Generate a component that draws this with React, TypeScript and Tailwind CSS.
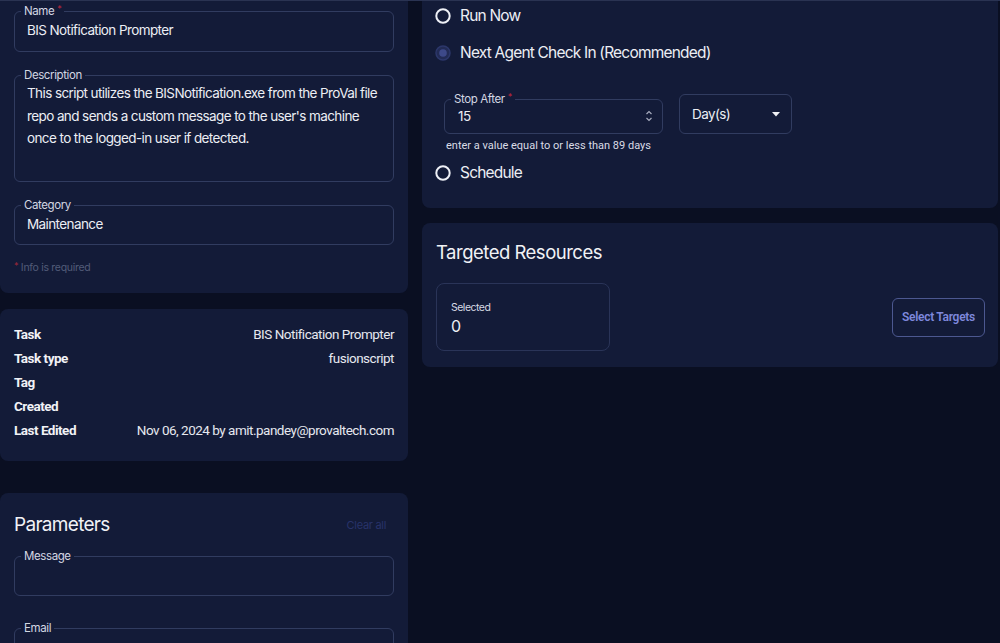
import React from "react";

const BORDER = "border-[#313c60]";

function Field({
  label,
  required,
  children,
  contentClass,
}: {
  label: string;
  required?: boolean;
  children?: React.ReactNode;
  contentClass: string;
}) {
  return (
    <fieldset className={`border ${BORDER} rounded-md px-[6px]`}>
      <legend className="px-[3px] text-[11.5px] tracking-[-0.4px] leading-[16px] text-[#d3d7e3]">
        {label}
        {required && <span className="text-[#c0263b] ml-[3px] relative top-[-3px] text-[9px]">*</span>}
      </legend>
      <div className={`pl-[6px] text-[13.5px] tracking-[-0.6px] text-[#eceef4] ${contentClass}`}>{children}</div>
    </fieldset>
  );
}

function RadioEmpty() {
  return (
    <svg width="16" height="16" viewBox="0 0 16 16" className="shrink-0">
      <circle cx="8" cy="8" r="6.7" fill="none" stroke="#eef0f6" strokeWidth="2" />
    </svg>
  );
}

function RadioChecked() {
  return (
    <svg width="16" height="16" viewBox="0 0 16 16" className="shrink-0">
      <circle cx="8" cy="8" r="7" fill="#222b55" stroke="#2c376a" strokeWidth="1.5" />
      <circle cx="8" cy="8" r="3.8" fill="#3d4989" />
    </svg>
  );
}

function InfoRow({ label, value }: { label: string; value?: string }) {
  return (
    <div className="flex items-center justify-between h-6 tracking-[-0.5px]">
      <span className="font-bold text-[13.5px] text-[#f1f2f6]">{label}</span>
      <span className="text-[13.5px] text-[#e6e8ef]">{value}</span>
    </div>
  );
}

export default function App() {
  return (
    <div
      className="w-[1000px] h-[643px] overflow-hidden bg-[#0a0f22] flex flex-col"
      style={{ fontFamily: "Inter, 'Noto Sans', sans-serif" }}
    >
      <div className="h-px bg-[#2a3352] shrink-0" />
      <div className="flex flex-1 min-h-0">
        {/* Left column */}
        <div className="w-[408px] shrink-0 flex flex-col">
          <div className="bg-[#131b38] rounded-b-lg px-[14px] pt-[2px] pb-[17px]">
            <Field label="Name" required contentClass="leading-[20px] h-[31px]">
              BIS Notification Prompter
            </Field>
            <div className="mt-[15px]">
              <Field label="Description" contentClass="leading-[22.5px] h-[99px] mt-[-1px]">
                This script utilizes the BISNotification.exe from the ProVal file repo and sends a custom message to
                the user's machine once to the logged-in user if detected.
              </Field>
            </div>
            <div className="mt-[15px]">
              <Field label="Category" contentClass="leading-[20px] h-[31px] pt-[1px]">
                Maintenance
              </Field>
            </div>
            <div className="mt-[15px] text-[10.5px] tracking-[-0.3px] leading-[16px] text-[#525b78]">
              <span className="text-[#a0283a] relative top-[-2px] text-[9px]">*</span> Info is required
            </div>
          </div>

          <div
            className="bg-[#131b38] rounded-lg mt-[16px] px-[14px] pt-[13px] pb-[19px]"
            style={{ fontFamily: "Roboto, 'Liberation Sans', sans-serif" }}
          >
            <InfoRow label="Task" value="BIS Notification Prompter" />
            <InfoRow label="Task type" value="fusionscript" />
            <InfoRow label="Tag" />
            <InfoRow label="Created" />
            <InfoRow label="Last Edited" value="Nov 06, 2024 by amit.pandey@provaltech.com" />
          </div>

          <div className="bg-[#131b38] rounded-lg mt-[32px] px-[14px] pt-[18px] flex-1">
            <div className="flex items-center justify-between h-7">
              <span className="text-[19px] tracking-[-0.7px] text-[#f1f2f6]">Parameters</span>
              <span className="text-[11px] tracking-[-0.3px] text-[#28336a] mr-[8px]">Clear all</span>
            </div>
            <div className="mt-[9px]">
              <Field label="Message" contentClass="h-[31px]" />
            </div>
            <div className="mt-[24px]">
              <Field label="Email" contentClass="h-[31px]" />
            </div>
          </div>
        </div>

        {/* Right column */}
        <div className="flex-1 ml-[14px] mr-[2px] flex flex-col">
          <div className="bg-[#131b38] rounded-b-lg pl-[13px] pt-[3px] pb-[23px]">
            <div className="flex items-center h-6 gap-[9px] text-[15.5px] tracking-[-0.8px] text-[#eceef4]">
              <RadioEmpty />
              <span>Run Now</span>
            </div>
            <div className="flex items-center h-6 gap-[9px] mt-[13px] text-[15.5px] tracking-[-0.8px] text-[#eceef4]">
              <RadioChecked />
              <span>Next Agent Check In (Recommended)</span>
            </div>
            <div className="ml-[9px] mt-[26px] flex items-start gap-[16px]">
              <fieldset className={`w-[219px] border ${BORDER} rounded-md px-[6px]`}>
                <legend className="px-[3px] text-[11.5px] tracking-[-0.4px] leading-[16px] text-[#d3d7e3]">
                  Stop After
                  <span className="text-[#c0263b] ml-[3px] relative top-[-3px] text-[9px]">*</span>
                </legend>
                <div className="flex items-center justify-between pl-[7px] pr-[3px] h-[20px] mb-[7px] mt-[-2px] text-[13.5px] tracking-[-0.4px] text-[#eceef4]">
                  <span>15</span>
                  <svg width="8" height="14" viewBox="0 0 8 14">
                    <path d="M1.5 5 L4 2.5 L6.5 5" fill="none" stroke="#a6abbd" strokeWidth="1.2" />
                    <path d="M1.5 9 L4 11.5 L6.5 9" fill="none" stroke="#a6abbd" strokeWidth="1.2" />
                  </svg>
                </div>
              </fieldset>
              <div className={`w-[113px] h-[40px] mt-[3px] border ${BORDER} rounded-md flex items-center justify-between pl-[12px] pr-[10px] text-[13.5px] tracking-[-0.6px] text-[#eceef4]`}>
                <span>Day(s)</span>
                <svg width="10" height="6" viewBox="0 0 10 6">
                  <path d="M1 1 L9 1 L5 5.5 Z" fill="#f0f1f5" />
                </svg>
              </div>
            </div>
            <div
              className="ml-[11px] mt-[5px] text-[11px] leading-[14px] text-[#d9dce6]"
              style={{ fontFamily: "Roboto, 'Liberation Sans', sans-serif" }}
            >
              enter a value equal to or less than 89 days
            </div>
            <div className="flex items-center h-6 gap-[9px] mt-[8px] text-[15.5px] tracking-[-0.8px] text-[#eceef4]">
              <RadioEmpty />
              <span>Schedule</span>
            </div>
          </div>

          <div className="bg-[#131b38] rounded-lg mt-[15px] px-[14px] pt-[16px] pb-[16px]">
            <div className="h-7 flex items-center text-[18.5px] tracking-[-0.5px] text-[#f1f2f6]">Targeted Resources</div>
            <div className="mt-[16px] flex items-center justify-between">
              <div className="w-[174px] h-[68px] border border-[#2a3458] rounded-lg pl-[14px] pt-[16px]">
                <div className="text-[10.5px] tracking-[-0.5px] leading-[16px] text-[#d7dae4]">Selected</div>
                <div className="text-[16px] leading-[20px] text-[#eceef4]">0</div>
              </div>
              <div
                className="w-[93px] h-[39px] mr-[-1px] border border-[#4c5890] rounded-md flex items-center justify-center text-[12px] tracking-[-0.3px] font-semibold text-[#7e88dc]"
                style={{ fontFamily: "Roboto, 'Liberation Sans', sans-serif" }}
              >
                Select Targets
              </div>
            </div>
          </div>
        </div>
      </div>
    </div>
  );
}
